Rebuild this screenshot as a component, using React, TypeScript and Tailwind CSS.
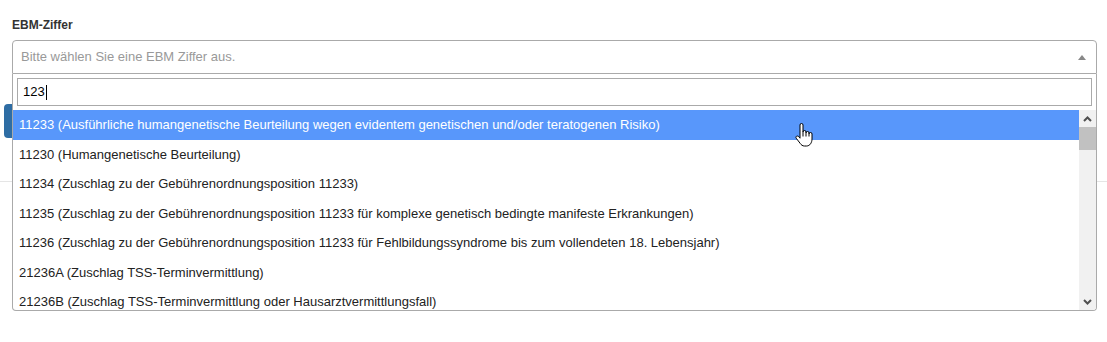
import React from 'react';

const OPTIONS = [
  '11233 (Ausführliche humangenetische Beurteilung wegen evidentem genetischen und/oder teratogenen Risiko)',
  '11230 (Humangenetische Beurteilung)',
  '11234 (Zuschlag zu der Gebührenordnungsposition 11233)',
  '11235 (Zuschlag zu der Gebührenordnungsposition 11233 für komplexe genetisch bedingte manifeste Erkrankungen)',
  '11236 (Zuschlag zu der Gebührenordnungsposition 11233 für Fehlbildungssyndrome bis zum vollendeten 18. Lebensjahr)',
  '21236A (Zuschlag TSS-Terminvermittlung)',
  '21236B (Zuschlag TSS-Terminvermittlung oder Hausarztvermittlungsfall)',
];

const HandCursor: React.FC = () => (
  <svg width="20" height="26" viewBox="0 0 20 26" className="absolute left-[794px] top-[122px] z-20">
    <path
      d="M6 3 a1.5 1.5 0 0 1 3 0 V10 a1.5 1.5 0 0 1 3 0 V11 a1.5 1.5 0 0 1 3 0 V12 a1.5 1.5 0 0 1 3 0 V17 c0 3.5 -2 7 -5.5 7 H10.5 c-2 0 -3.2 -1 -4.3 -2.6 L2.2 16.2 c-0.7 -1 0 -2.2 1.1 -2.2 c0.8 0 1.3 0.5 1.8 1.1 L6 16.2 Z"
      fill="#fff"
      stroke="#000"
      strokeWidth="1"
      strokeLinejoin="round"
    />
    <path d="M9 10 V14.5 M12 11 V14.5 M15 12 V14.5" stroke="#000" strokeWidth="1" />
  </svg>
);

const Chevron: React.FC<{ up?: boolean }> = ({ up }) => (
  <svg width="9" height="6" viewBox="0 0 9 6">
    <path
      d={up ? 'M1 5 L4.5 1.5 L8 5' : 'M1 1 L4.5 4.5 L8 1'}
      fill="none"
      stroke="#505050"
      strokeWidth="2"
    />
  </svg>
);

export default function App() {
  return (
    <div className="relative min-h-[342px] bg-white font-['Liberation_Sans',Arial,sans-serif] text-[#333]">
      <div className="px-[12px] pt-[17px] pr-[10px]">
        <div className="text-[12px] leading-[17px] font-bold mb-[6px]">EBM-Ziffer</div>

        <div className="relative">
          {/* Selection */}
          <div className="h-[34px] border border-[#aaa] rounded-t-[4px] flex items-center justify-between pl-[8px] pr-[8px]">
            <span className="text-[13px] text-[#999]">Bitte wählen Sie eine EBM Ziffer aus.</span>
            <span className="w-0 h-0 border-l-[4px] border-r-[4px] border-b-[5px] border-l-transparent border-r-transparent border-b-[#888] mr-[2px]" />
          </div>

          {/* Dropdown */}
          <div className="absolute left-0 right-0 top-[34px] z-10 bg-white border-x border-b border-[#aaa] rounded-b-[4px] overflow-hidden">
            <div className="p-[4px]">
              <div className="h-[28px] border border-[#aaa] px-[5px] flex items-center text-[13px] text-black">
                <span>123</span>
                <span className="w-px h-[15px] bg-black ml-px" />
              </div>
            </div>
            <div className="flex h-[200px]">
              <div className="flex-1 overflow-hidden">
                {OPTIONS.map((opt, i) => (
                  <div
                    key={opt}
                    className={`h-[29.5px] px-[6px] flex items-center text-[13px] whitespace-nowrap ${
                      i === 0 ? 'bg-[#5897fb] text-white' : 'text-[#222]'
                    }`}
                  >
                    {opt}
                  </div>
                ))}
              </div>
              {/* Scrollbar */}
              <div className="w-[17px] bg-[#f1f1f1] flex flex-col">
                <div className="h-[17px] flex items-center justify-center">
                  <Chevron up />
                </div>
                <div className="h-[23px] bg-[#c1c1c1]" />
                <div className="flex-1" />
                <div className="h-[17px] flex items-center justify-center">
                  <Chevron />
                </div>
              </div>
            </div>
          </div>
        </div>

        {/* Content behind the dropdown */}
        <div className="mt-[30px] -ml-[8px] w-[90px] h-[34px] bg-[#2e6da4] rounded-[4px]" />
      </div>
      <div className="mt-[43px] border-t border-[#e5e5e5]" />

      <HandCursor />
    </div>
  );
}
